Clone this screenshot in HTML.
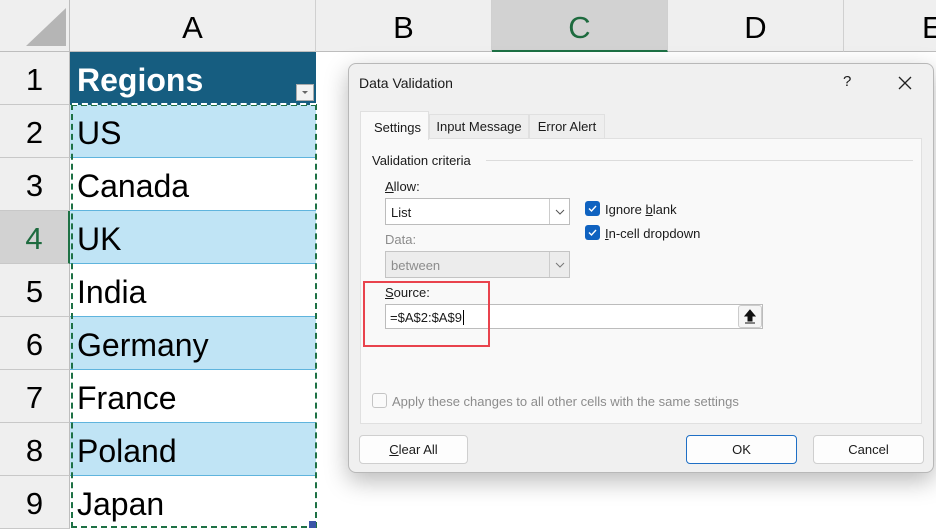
<!DOCTYPE html>
<html><head><style>
*{box-sizing:border-box;margin:0;padding:0}
body{width:936px;height:531px;overflow:hidden;background:#fff;font-family:"Liberation Sans",sans-serif;position:relative}
.abs{position:absolute;white-space:nowrap}
.ch{position:absolute;top:0;height:52px;background:#efefef;border-right:1px solid #d0d0d0;border-bottom:1px solid #bdbdbd;font-size:31px;text-align:center;line-height:56px;color:#000}
.rh{position:absolute;left:0;width:70px;height:53px;background:#efefef;border-bottom:1px solid #c8c8c8;border-right:1px solid #bdbdbd;font-size:31px;text-align:center;line-height:56px}
.cell{position:absolute;left:70px;width:246px;height:53px;font-size:32px;line-height:56px;padding-left:7px;border-bottom:1px solid #5fb4dd}
.blue{background:#c0e4f5}
.dlg{position:absolute;left:348px;top:63px;width:586px;height:410px;background:#f0f0f0;border:1px solid #b8b8b8;border-radius:8px;box-shadow:0 8px 24px rgba(0,0,0,.28);font-size:13px;color:#1a1a1a}
.btn{position:absolute;top:371px;height:29px;background:#fdfdfd;border:1px solid #cfcfcf;border-radius:4px;text-align:center;line-height:27px;font-size:13px}
.cb{position:absolute;width:15px;height:15px;border-radius:3px;background:#0f62c0}
.cb svg{position:absolute;left:2px;top:2px}
.tab{position:absolute;top:50px;height:24px;background:#eeeeee;border:1px solid #e0e0e0;border-bottom:none;text-align:center;line-height:24px}
</style></head><body>
<div class="abs" style="left:0;top:0;width:70px;height:52px;background:#efefef;border-right:1px solid #bdbdbd;border-bottom:1px solid #bdbdbd"></div>
<svg class="abs" style="left:22px;top:6px" width="46" height="42"><polygon points="44,2 44,40 4,40" fill="#b5b5b5"/></svg>
<div class="ch" style="left:70px;width:246px">A</div>
<div class="ch" style="left:316px;width:176px">B</div>
<div class="ch" style="left:492px;width:176px;background:#d2d2d2;color:#1e6b3f;border-bottom:2px solid #1e7145">C</div>
<div class="ch" style="left:668px;width:176px">D</div>
<div class="ch" style="left:844px;width:100px;text-align:left;padding-left:78px">E</div>

<div class="rh" style="top:52px">1</div>
<div class="rh" style="top:105px">2</div>
<div class="rh" style="top:158px">3</div>
<div class="rh" style="top:211px;background:#d2d2d2;color:#1e6b3f;border-right:2px solid #1e7145">4</div>
<div class="rh" style="top:264px">5</div>
<div class="rh" style="top:317px">6</div>
<div class="rh" style="top:370px">7</div>
<div class="rh" style="top:423px">8</div>
<div class="rh" style="top:476px">9</div>

<div class="cell" style="top:52px;background:#165d80;color:#fff;font-weight:bold;border-bottom:none">Regions</div>
<div class="abs" style="left:296px;top:84px;width:18px;height:17px;background:#f2f2f2;border:1px solid #aaa"><svg width="16" height="15"><polygon points="5,6 11,6 8,9" fill="#666"/></svg></div>
<div class="cell blue" style="top:105px">US</div>
<div class="cell" style="top:158px">Canada</div>
<div class="cell blue" style="top:211px">UK</div>
<div class="cell" style="top:264px">India</div>
<div class="cell blue" style="top:317px">Germany</div>
<div class="cell" style="top:370px">France</div>
<div class="cell blue" style="top:423px">Poland</div>
<div class="cell" style="top:476px;border-bottom:none">Japan</div>
<div class="abs" style="left:71px;top:104px;width:246px;height:424px;border:2px dashed #1e7145"></div>
<div class="abs" style="left:72px;top:103px;width:244px;height:0;border-top:2px dashed #fff"></div>
<div class="abs" style="left:309px;top:521px;width:7px;height:7px;background:#3b55a8"></div>

<div class="dlg">
 <div class="abs" style="left:10px;top:11px;font-size:14px">Data Validation</div>
 <div class="abs" style="left:494px;top:9px;font-size:15px">?</div>
 <svg class="abs" style="left:549px;top:12px" width="14" height="14"><path d="M1 1L13 13M13 1L1 13" stroke="#222" stroke-width="1.3"/></svg>
 <div class="abs" style="left:11px;top:74px;width:562px;height:286px;background:#f9f9f9;border:1px solid #e0e0e0"></div>
 <div class="abs" style="left:11px;top:47px;width:69px;height:29px;background:#f9f9f9;border:1px solid #e0e0e0;border-bottom:none;padding:8px 0 0 13px">Settings</div>
 <div class="tab" style="left:80px;width:100px">Input Message</div>
 <div class="tab" style="left:180px;width:76px">Error Alert</div>
 <div class="abs" style="left:23px;top:89px">Validation criteria</div>
 <div class="abs" style="left:137px;top:96px;width:427px;height:1px;background:#dcdcdc"></div>
 <div class="abs" style="left:36px;top:115px"><u>A</u>llow:</div>
 <div class="abs" style="left:36px;top:134px;width:185px;height:27px;background:#fff;border:1px solid #bcbcbc;padding:6px 0 0 5px">List</div>
 <div class="abs" style="left:200px;top:135px;width:20px;height:25px;border-left:1px solid #ccc"><svg width="20" height="25"><path d="M6 11l4 4 4-4" stroke="#555" fill="none"/></svg></div>
 <div class="abs" style="left:36px;top:168px;color:#8c8c8c">Data:</div>
 <div class="abs" style="left:36px;top:187px;width:185px;height:27px;background:#ececec;border:1px solid #c4c4c4;padding:6px 0 0 5px;color:#8c8c8c">between</div>
 <div class="abs" style="left:200px;top:188px;width:20px;height:25px;border-left:1px solid #ccc"><svg width="20" height="25"><path d="M6 11l4 4 4-4" stroke="#777" fill="none"/></svg></div>
 <div class="cb" style="left:236px;top:137px"><svg width="11" height="11"><path d="M2 5.5l2.5 2.5 4.5-5" stroke="#fff" stroke-width="1.4" fill="none"/></svg></div>
 <div class="abs" style="left:256px;top:138px">Ignore <u>b</u>lank</div>
 <div class="cb" style="left:236px;top:161px"><svg width="11" height="11"><path d="M2 5.5l2.5 2.5 4.5-5" stroke="#fff" stroke-width="1.4" fill="none"/></svg></div>
 <div class="abs" style="left:256px;top:162px"><u>I</u>n-cell dropdown</div>
 <div class="abs" style="left:36px;top:221px"><u>S</u>ource:</div>
 <div class="abs" style="left:36px;top:240px;width:378px;height:25px;background:#fff;border:1px solid #bcbcbc;padding:5px 0 0 4px">=$A$2:$A$9<span style="border-left:1px solid #000;margin-left:1px"></span></div>
 <div class="abs" style="left:389px;top:241px;width:24px;height:23px;background:#f5f5f5;border:1px solid #ccc;border-radius:3px"><svg width="22" height="21"><path d="M11 4L6 10h3v5h4v-5h3z M6 17h10" fill="#111" stroke="#111" stroke-width="1"/></svg></div>
 <div class="abs" style="left:14px;top:217px;width:127px;height:66px;border:2px solid #e9434d"></div>
 <div class="abs" style="left:23px;top:329px;width:15px;height:15px;border:1px solid #c4c4c4;border-radius:3px;background:#fafafa"></div>
 <div class="abs" style="left:43px;top:330px;color:#8c8c8c">Apply these changes to all other cells with the same settings</div>
 <div class="btn" style="left:10px;width:109px"><u>C</u>lear All</div>
 <div class="btn" style="left:337px;width:111px;border-color:#1f6fc5">OK</div>
 <div class="btn" style="left:464px;width:111px">Cancel</div>
</div>
</body></html>
